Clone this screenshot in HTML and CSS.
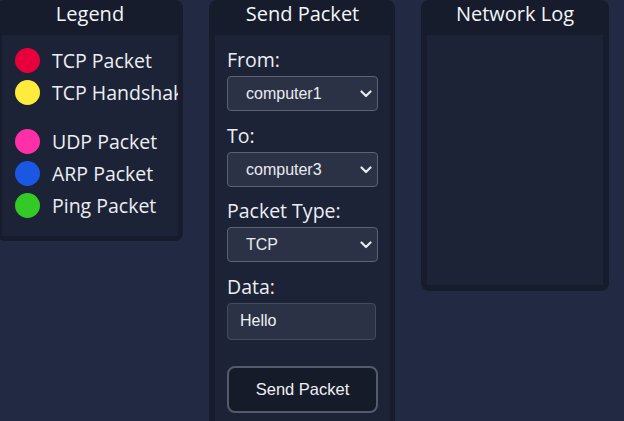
FILE: index.html
```html
<!DOCTYPE html>
<html>
<head>
<meta charset="utf-8">
<link rel="stylesheet" href="styles.css">
</head>
<body>
<div class="board">
  <section class="panel panel-legend">
    <h2 class="panel-title">Legend</h2>
    <div class="panel-body legend-body">
      <div class="legend-item"><span class="dot dot-tcp"></span><span class="legend-label">TCP Packet</span></div>
      <div class="legend-item legend-item-tall"><span class="dot dot-hs"></span><span class="legend-label">TCP Handshake Packet</span></div>
      <div class="legend-item"><span class="dot dot-udp"></span><span class="legend-label">UDP Packet</span></div>
      <div class="legend-item"><span class="dot dot-arp"></span><span class="legend-label">ARP Packet</span></div>
      <div class="legend-item"><span class="dot dot-ping"></span><span class="legend-label">Ping Packet</span></div>
    </div>
  </section>

  <section class="panel panel-send">
    <h2 class="panel-title">Send Packet</h2>
    <div class="panel-body send-body">
      <div class="field">
        <label class="field-label">From:</label>
        <div class="select-wrap">
          <select class="select"><option>computer1</option></select>
          <svg class="chev" width="12" height="8" viewBox="0 0 12 8"><path d="M1.5 1.5 L6 6 L10.5 1.5" fill="none" stroke="#e6e8ee" stroke-width="2.2" stroke-linecap="round" stroke-linejoin="round"/></svg>
        </div>
      </div>
      <div class="field">
        <label class="field-label">To:</label>
        <div class="select-wrap">
          <select class="select"><option>computer3</option></select>
          <svg class="chev" width="12" height="8" viewBox="0 0 12 8"><path d="M1.5 1.5 L6 6 L10.5 1.5" fill="none" stroke="#e6e8ee" stroke-width="2.2" stroke-linecap="round" stroke-linejoin="round"/></svg>
        </div>
      </div>
      <div class="field">
        <label class="field-label">Packet Type:</label>
        <div class="select-wrap">
          <select class="select"><option>TCP</option></select>
          <svg class="chev" width="12" height="8" viewBox="0 0 12 8"><path d="M1.5 1.5 L6 6 L10.5 1.5" fill="none" stroke="#e6e8ee" stroke-width="2.2" stroke-linecap="round" stroke-linejoin="round"/></svg>
        </div>
      </div>
      <div class="field">
        <label class="field-label">Data:</label>
        <input class="text-input" type="text" value="Hello">
      </div>
      <button class="send-btn">Send Packet</button>
    </div>
  </section>

  <section class="panel panel-log">
    <h2 class="panel-title">Network Log</h2>
    <div class="panel-body log-body"></div>
  </section>
</div>
</body>
</html>
```

FILE: styles.css
```css
* { box-sizing: border-box; }
html, body {
  margin: 0;
  padding: 0;
  background: #212a42;
  height: 100%;
  overflow: hidden;
}
body {
  font-family: "Open Sans", "Noto Sans", sans-serif;
  color: #eceef3;
}
.board {
  display: flex;
  align-items: flex-start;
  gap: 26px;
  margin-left: -3px;
}
.panel {
  background: #161c2b;
  border-radius: 8px;
  padding: 0 5px 5px 5px;
  display: flex;
  flex-direction: column;
}
.panel-legend { width: 186px; }
.panel-send { width: 186px; padding-left: 6px; }
.panel-log { width: 188px; padding: 0 6px 6px 6px; }
.panel-title {
  margin: 0;
  height: 35px;
  line-height: 28px;
  font-size: 20px;
  font-weight: 500;
  text-align: center;
  color: #f4f6fa;
}
.panel-body {
  background: #1c2336;
}
.legend-body {
  padding: 13px 0 11px 13px;
  overflow: hidden;
  display: flex;
  flex-direction: column;
}
.legend-item {
  display: flex;
  align-items: center;
  gap: 12px;
  height: 25px;
  margin-bottom: 7px;
  white-space: nowrap;
}
.legend-item-tall { margin-bottom: 24px; }
.legend-label {
  font-size: 19.5px;
  font-weight: 500;
  line-height: 25px;
}
.dot {
  flex: none;
  width: 25px;
  height: 25px;
  border-radius: 50%;
}
.dot-tcp { background: #e8003d; }
.dot-hs { background: #ffeb3b; }
.dot-udp { background: #ff2fa8; }
.dot-arp { background: #1a58e3; }
.dot-ping { background: #33c926; }

.send-body {
  padding: 13px 12px 20px 12px;
  display: flex;
  flex-direction: column;
}
.field {
  display: flex;
  flex-direction: column;
  margin-bottom: 12.5px;
}
.field-label {
  font-size: 19.5px;
  font-weight: 500;
  line-height: 24px;
  margin-bottom: 4px;
}
.select-wrap {
  position: relative;
  width: 151px;
}
.select {
  appearance: none;
  -webkit-appearance: none;
  display: block;
  width: 151px;
  height: 35px;
  background: #2b3246;
  border: 1px solid #5c6272;
  border-radius: 4px;
  color: #e9ebf0;
  font-family: "Liberation Sans", Arial, sans-serif;
  font-size: 16px;
  padding: 0 0 0 18px;
  margin: 0;
}
.chev {
  position: absolute;
  right: 6px;
  top: 14px;
  pointer-events: none;
}
.text-input {
  display: block;
  width: 149px;
  height: 37px;
  background: #2b3246;
  border: 1px solid #444b5c;
  border-radius: 4px;
  color: #eef0f4;
  font-family: "Liberation Sans", Arial, sans-serif;
  font-size: 16px;
  padding: 0 0 0 12px;
  margin: 0;
}
.send-btn {
  margin-top: 13.5px;
  width: 151px;
  height: 47px;
  background: #161b29;
  border: 2px solid #555b6a;
  border-radius: 8px;
  color: #eef0f4;
  font-family: "Liberation Sans", Arial, sans-serif;
  font-size: 16.5px;
  padding: 0;
}
.log-body {
  height: 250px;
}
```
